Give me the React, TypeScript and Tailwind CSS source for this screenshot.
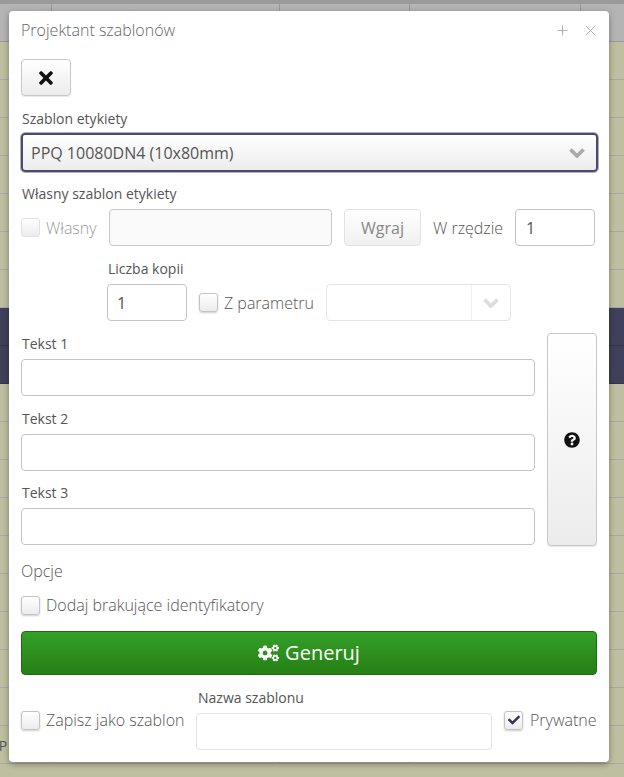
import React from 'react';
import { FaCheck, FaCogs, FaQuestionCircle, FaTimes } from 'react-icons/fa';

const font = "font-['Open_Sans',sans-serif]";

function Check({ label, checked, disabled }: { label: string; checked?: boolean; disabled?: boolean }) {
    return (
        <label className={`flex items-center whitespace-nowrap ${checked ? 'gap-[7px]' : 'gap-[6px]'}`}>
            <span className={`flex h-[19px] w-[19px] items-center justify-center rounded-[3px] border bg-gradient-to-b from-white to-[#ececec] ${disabled ? 'border-[#e2e2e2]' : 'border-[#c4c4c4] shadow-[0_1px_2px_rgba(0,0,0,0.2)]'}`}>
                {checked && <FaCheck className="h-[12px] w-[12px] text-[#33334f]" />}
            </span>
            <span className={`text-[16px] font-light leading-[22px] ${disabled ? 'text-[#999]' : 'text-[#555]'}`}>{label}</span>
        </label>
    );
}

function Chevron({ className }: { className: string }) {
    return (
        <svg viewBox="0 0 16 10" className={className} fill="none" stroke="currentColor" strokeWidth="3.8">
            <path d="M1.5 1.5 L8 8 L14.5 1.5" />
        </svg>
    );
}

function TextField({ label }: { label: string }) {
    return (
        <div>
            <div className="mb-[5px] pl-[1px] text-[14px] leading-[20px] text-[#555]">{label}</div>
            <div className="h-[37px] rounded-[4px] border border-[#c4c4c4] bg-white" />
        </div>
    );
}

function BgRow({ dark, text }: { dark?: boolean; text?: string }) {
    return (
        <div className={`grid h-[38px] grid-cols-[52px_228px_130px_171px_43px] border-b ${dark ? 'border-[#34344a] bg-[#41405a]' : 'border-[#a8a8a6] bg-[#bebea0]'}`}>
            <div className={`overflow-hidden whitespace-nowrap pt-[9px] text-[14px] text-[#555] ${dark ? '' : 'border-r border-[#a8a8a6]'}`}>
                {text && <span className="ml-[-9px]">{text}</span>}
            </div>
            <div className={dark ? '' : 'border-r border-[#a8a8a6]'} />
            <div className={dark ? '' : 'border-r border-[#a8a8a6]'} />
            <div className={dark ? '' : 'border-r border-[#a8a8a6]'} />
            <div />
        </div>
    );
}

export default function App() {
    const rows = Array.from({ length: 19 });
    return (
        <div className={`relative h-[777px] w-[624px] overflow-hidden bg-[#bebea0] ${font}`}>
            <div className="h-[4px] bg-[#9a9a9a]" />
            <div className="grid h-[38px] grid-cols-[52px_228px_130px_171px_43px] border-b border-[#999] bg-[#b4b4b4]">
                <div className="border-r border-[#999]" />
                <div className="border-r border-[#999]" />
                <div className="border-r border-[#999]" />
                <div className="border-r border-[#999]" />
                <div className="pt-[15px] text-[13px] leading-[18px] text-[#555]">o...</div>
            </div>
            {rows.map((_, i) => (
                <BgRow key={i} dark={i === 7 || i === 8} text={i === 18 ? 'YP' : undefined} />
            ))}

            <div className="absolute left-[9px] top-[11px] box-content h-[751px] w-[576px] rounded-[4px] bg-white px-[12px] shadow-[0_2px_6px_rgba(0,0,0,0.35)]">
                <div className="flex h-[38px] items-center justify-between">
                    <span className="text-[16px] font-light text-[#666]">Projektant szablonów</span>
                    <span className="mr-[1px] flex items-center gap-[17px] text-[#aaa]">
                        <svg viewBox="0 0 12 12" className="h-[11px] w-[11px]" stroke="currentColor" fill="none"><path d="M6 0.5 V11.5 M0.5 6 H11.5" /></svg>
                        <svg viewBox="0 0 12 12" className="h-[11px] w-[11px]" stroke="currentColor" fill="none"><path d="M1 1 L11 11 M11 1 L1 11" /></svg>
                    </span>
                </div>
                <button className="mt-[10px] flex h-[37px] w-[50px] items-center justify-center rounded-[4px] border border-[#c8c8c8] bg-gradient-to-b from-white to-[#ececec] shadow-[0_1px_1px_rgba(0,0,0,0.1)]">
                    <FaTimes className="h-[20px] w-[20px] text-[#111]" />
                </button>

                <div className="mt-[13px] pl-[1px] text-[14px] leading-[20px] text-[#555]">Szablon etykiety</div>
                <div className="mt-[4px] flex h-[39px] w-[577px] items-center justify-between rounded-[4px] border-2 border-[#4a4a6a] bg-gradient-to-b from-white to-[#ececec] pl-[8px] pr-[11px] outline outline-1 outline-[#b0b0bc]">
                    <span className="text-[16px] text-[#555]">PPQ 10080DN4 (10x80mm)</span>
                    <Chevron className="h-[10px] w-[16px] text-[#aaa]" />
                </div>

                <div className="mt-[12px] pl-[1px] text-[14px] leading-[20px] text-[#555]">Własny szablon etykiety</div>
                <div className="mt-[5px] flex items-center">
                    <div className="w-[88px]"><Check label="Własny" disabled /></div>
                    <div className="h-[37px] w-[223px] rounded-[4px] border border-[#c8c8c8] bg-[#fafafa]" />
                    <button className="ml-[12px] h-[37px] w-[77px] rounded-[4px] border border-[#e2e2e2] bg-gradient-to-b from-white to-[#f0f0f0] text-[16px] text-[#888]">Wgraj</button>
                    <span className="ml-[12px] w-[70px] whitespace-nowrap text-[16px] font-light text-[#555]">W rzędzie</span>
                    <div className="ml-[12px] flex h-[37px] w-[80px] items-center rounded-[4px] border border-[#c4c4c4] pl-[10px] text-[16px] text-[#555]">1</div>
                </div>

                <div className="mt-[13px] pl-[87px] text-[14px] leading-[20px] text-[#555]">Liczba kopii</div>
                <div className="mt-[5px] flex items-center pl-[86px]">
                    <div className="flex h-[37px] w-[80px] items-center rounded-[4px] border border-[#c4c4c4] pl-[9px] text-[16px] text-[#555]">1</div>
                    <div className="ml-[12px] w-[115px]"><Check label="Z parametru" /></div>
                    <div className="ml-[12px] flex h-[37px] w-[185px] rounded-[4px] border border-[#e4e4e4]">
                        <div className="flex-1 border-r border-[#eee]" />
                        <div className="flex w-[38px] items-center justify-center">
                            <Chevron className="h-[10px] w-[16px] text-[#ddd]" />
                        </div>
                    </div>
                </div>

                <div className="mt-[12px] flex gap-[12px]">
                    <div className="flex w-[514px] flex-col pt-[1px]">
                        <TextField label="Tekst 1" />
                        <div className="h-[13px]" />
                        <TextField label="Tekst 2" />
                        <div className="h-[12px]" />
                        <TextField label="Tekst 3" />
                    </div>
                    <button className="flex h-[213px] w-[50px] items-center justify-center rounded-[4px] border border-[#c8c8c8] bg-gradient-to-b from-white to-[#ececec] shadow-[0_1px_1px_rgba(0,0,0,0.1)]">
                        <FaQuestionCircle className="h-[16px] w-[16px] text-[#111]" />
                    </button>
                </div>

                <div className="mt-[14px] text-[16px] font-light leading-[22px] text-[#555]">Opcje</div>
                <div className="mt-[12px]"><Check label="Dodaj brakujące identyfikatory" /></div>

                <button className="mt-[15px] flex h-[44px] w-[576px] items-center justify-center gap-[6px] rounded-[4px] border border-[#1f6b14] bg-gradient-to-b from-[#34a027] to-[#267f15] text-[20px] text-white">
                    <FaCogs className="h-[20px] w-[21px]" />
                    <span>Generuj</span>
                </button>

                <div className="mt-[13px] flex">
                    <div className="mt-[21px] w-[175px]"><Check label="Zapisz jako szablon" /></div>
                    <div className="w-[296px]">
                        <div className="pl-[2px] text-[14px] leading-[20px] text-[#555]">Nazwa szablonu</div>
                        <div className="mt-[5px] h-[37px] rounded-[4px] border border-[#e4e4e4]" />
                    </div>
                    <div className="ml-[12px] mt-[21px]"><Check label="Prywatne" checked /></div>
                </div>
            </div>
        </div>
    );
}
